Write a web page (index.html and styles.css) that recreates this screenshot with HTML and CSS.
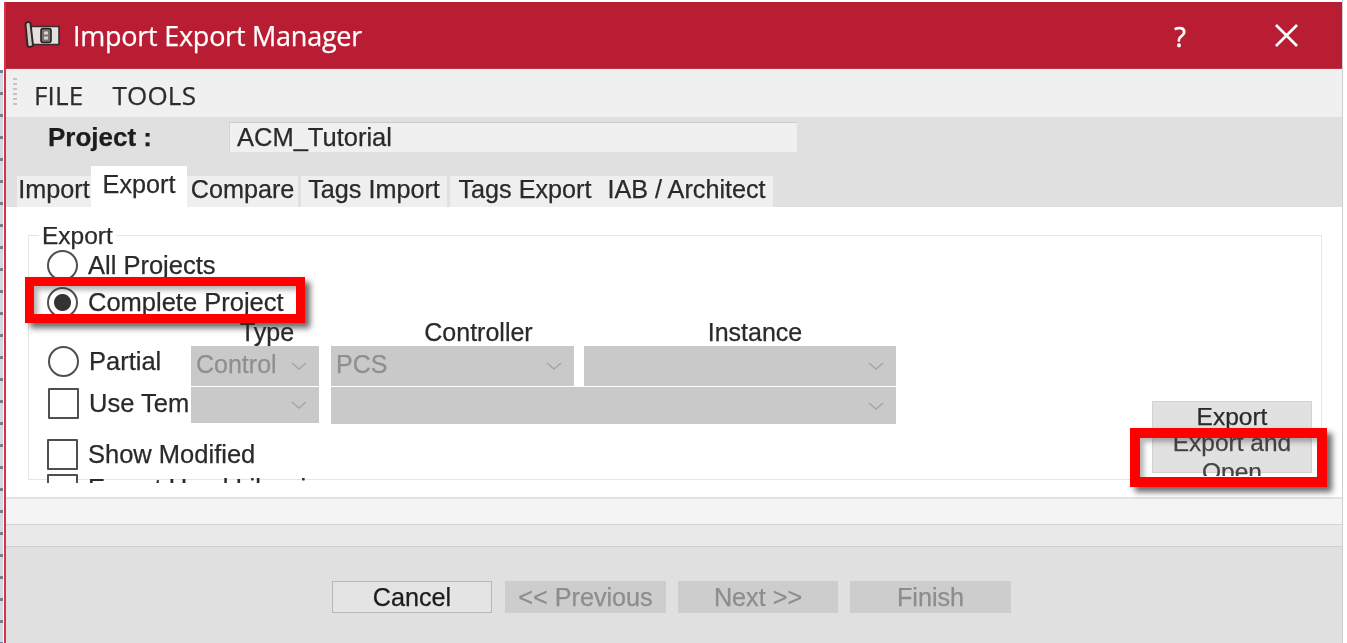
FILE: index.html
```html
<!DOCTYPE html>
<html lang="en">
<head>
<meta charset="utf-8">
<title>Import Export Manager</title>
<link rel="stylesheet" href="styles.css">
</head>
<body>
<div class="window">
  <header class="titlebar">
    <svg class="app-icon" viewBox="0 0 36 26" aria-hidden="true">
      <path d="M7 5 H35 V23 H7 Z" fill="#e4e2df" stroke="#3a2a2a" stroke-width="1.6"/>
      <path d="M1.5 3 C1.5 0 6 0 6.5 2 L9 24 C7 26 4 26 3.5 24 Z" fill="#cfcac3" stroke="#33282a" stroke-width="2"/>
      <rect x="17" y="7" width="10" height="14" rx="2" fill="#77716f" stroke="#2a2020" stroke-width="1.6"/>
      <rect x="20" y="10" width="4" height="3" fill="#d8d4d0"/>
      <rect x="20" y="15" width="4" height="3" fill="#d8d4d0"/>
    </svg>
    <h1 class="title">Import Export Manager</h1>
    <span class="help">?</span>
    <svg class="close" viewBox="0 0 24 24" aria-hidden="true"><path d="M1 1 L23 23 M23 1 L1 23" stroke="#fff" stroke-width="2.8"/></svg>
  </header>

  <nav class="menubar">
    <span class="gripper"></span>
    <span class="menu-item">FILE</span>
    <span class="menu-item">TOOLS</span>
  </nav>

  <div class="project-row">
    <label class="project-label">Project :</label>
    <div class="project-input">ACM_Tutorial</div>
  </div>

  <div class="tabs">
    <span class="tab tab-import">Import</span>
    <span class="tab tab-export is-active">Export</span>
    <span class="tab tab-compare">Compare</span>
    <span class="tab tab-timport">Tags Import</span>
    <span class="tab tab-texport">Tags Export</span>
    <span class="tab tab-iab">IAB / Architect</span>
  </div>

  <main class="panel">
    <section class="group">
      <span class="group-title">Export</span>
      <div class="group-body">
        <div class="opt opt-all"><span class="radio"></span><span>All Projects</span></div>
        <div class="opt opt-complete"><span class="radio is-checked"></span><span>Complete Project</span></div>

        <span class="col-label col-type">Type</span>
        <span class="col-label col-controller">Controller</span>
        <span class="col-label col-instance">Instance</span>

        <div class="opt opt-partial"><span class="radio"></span><span>Partial</span></div>
        <div class="select sel-type"><span>Control</span><svg class="chev" viewBox="0 0 16 8"><path d="M1 1 L8 7 L15 1"/></svg></div>
        <div class="select sel-controller"><span>PCS</span><svg class="chev" viewBox="0 0 16 8"><path d="M1 1 L8 7 L15 1"/></svg></div>
        <div class="select sel-instance"><span></span><svg class="chev" viewBox="0 0 16 8"><path d="M1 1 L8 7 L15 1"/></svg></div>

        <div class="opt opt-template"><span class="check"></span><span>Use Tem</span></div>
        <div class="select sel-type2"><span></span><svg class="chev" viewBox="0 0 16 8"><path d="M1 1 L8 7 L15 1"/></svg></div>
        <div class="select sel-wide"><span></span><svg class="chev" viewBox="0 0 16 8"><path d="M1 1 L8 7 L15 1"/></svg></div>

        <div class="opt opt-modified"><span class="check"></span><span>Show Modified</span></div>
        <div class="opt opt-hidden"><span class="check"></span><span>Export Used Libraries</span></div>

        <div class="actions">
          <button class="btn btn-export">Export</button>
          <div class="btn-clip"><button class="btn btn-open"><span class="btn-open-text">Export and<br>Open</span></button></div>
        </div>
      </div>
    </section>
  </main>

  <div class="status"></div>
  <div class="strip"></div>

  <footer class="footer">
    <button class="nav-btn">Cancel</button>
    <button class="nav-btn is-disabled">&lt;&lt; Previous</button>
    <button class="nav-btn is-disabled">Next &gt;&gt;</button>
    <button class="nav-btn is-disabled">Finish</button>
  </footer>

  <div class="callout callout-project"></div>
  <div class="callout callout-open"></div>
</div>
</body>
</html>
```

FILE: styles.css
```css
* { box-sizing: border-box; }
html, body { margin: 0; height: 100%; }
body {
  background: #fff repeating-linear-gradient(180deg, #6f8194 0 3px, #d3d9e0 3px 22px) 0 70px / 3px 100% no-repeat;
  padding-left: 4px;
  overflow: hidden;
  font-family: "Liberation Sans", Arial, sans-serif;
  color: #222;
}
.window {
  position: relative;
  width: 1339px;
  height: 643px;
  padding-top: 2px;
  display: flex;
  flex-direction: column;
  border-right: 1px solid #cfcfcf;
  filter: blur(0.75px);
  background: #fff;
  -webkit-text-stroke: 0.25px currentColor;
}
.window::before {
  content: "";
  position: absolute;
  left: 0; top: 2px; bottom: 0;
  width: 2px;
  background: #d8324a;
  z-index: 1;
}

/* title bar */
.titlebar {
  height: 67px;
  flex: none;
  display: flex;
  align-items: center;
  background: #b91d33;
  color: #fff;
  padding-left: 20px;
  border-bottom: 1px solid #c2334a;
}
.app-icon { width: 36px; height: 27px; flex: none; margin-top: -1px; }
.title {
  margin: 0 0 0 13px;
  font: 400 27px/1 "Open Sans", sans-serif;
  letter-spacing: -0.25px;
  flex: 1;
}
.help { font: 400 27px/1 "Open Sans", sans-serif; margin: 2px 89px 0 0; -webkit-text-stroke: 0.6px #fff; }
.close { width: 23px; height: 23px; margin-right: 44px; flex: none; margin-top: 1px; }

/* menu */
.menubar {
  height: 48px;
  flex: none;
  display: flex;
  align-items: center;
  background: #f0f0f0;
  padding: 3px 0 0 9px;
  font: 400 26px/1 "Open Sans", sans-serif;
  color: #2c2c2c;
}
.gripper {
  width: 4px; height: 30px;
  margin-top: -3px;
  background: repeating-linear-gradient(180deg, #c4c4c4 0 2px, transparent 2px 5px);
  margin-right: 17px;
}
.menu-item { margin-right: 29px; letter-spacing: 0.2px; }

/* project */
.project-row {
  height: 49px;
  flex: none;
  display: flex;
  align-items: flex-start;
  background: #e0e0e0;
  padding: 5px 0 0 44px;
}
.project-label { width: 181px; font-weight: 700; font-size: 26px; line-height: 30px; color: #1c1c1c; }
.project-input {
  width: 568px; height: 30px;
  background: #f0f0f0;
  border-top: 1px solid #ccc;
  border-left: 1px solid #d4d4d4;
  padding-left: 7px;
  font-size: 25.5px; line-height: 29px;
  color: #2a2a2a;
}

/* tabs */
.tabs {
  height: 41px;
  flex: none;
  display: flex;
  align-items: flex-end;
  background: #e0e0e0;
  padding-left: 13px;
  font-size: 25.2px;
}
.tab {
  height: 31px;
  line-height: 26px;
  text-align: center;
  background: #efefef;
  color: #2a2a2a;
  white-space: nowrap;
  flex: none;
}
.tab-import { width: 74px; }
.tab-export { width: 96px; height: 41px; line-height: 36px; background: #fff; }
.tab-compare { width: 111px; }
.tab-timport { width: 146px; margin-left: 3px; }
.tab-texport { width: 150px; margin-left: 3px; }
.tab-iab { width: 173px; }

/* panel */
.panel {
  height: 290px;
  flex: none;
  background: #fff;
  padding: 28px 20px 0 24px;
}
.group {
  position: relative;
  height: 245px;
  border: 1px solid #e6e6e6;
}
.group-title {
  position: absolute;
  left: 10px; top: -13px;
  padding: 0 3px;
  background: #fff;
  font-size: 24.5px;
  line-height: 26px;
  color: #2a2a2a;
}
.group-body {
  height: 247px;
  overflow: hidden;
  display: grid;
  grid-template-columns: 162px 128px 12px 243px 10px 312px 1fr;
  grid-template-rows: 10px 38px 36px 26px 40px 38px 12px 38px 1fr;
  font-size: 25.5px;
  color: #2a2a2a;
}
.opt { display: flex; align-items: center; gap: 10px; padding-left: 18px; white-space: nowrap; min-width: 0; }
.opt-all { grid-column: 1 / 4; grid-row: 2; }
.opt-complete { grid-column: 1 / 4; grid-row: 3; }
.opt-partial { grid-column: 1; grid-row: 5; padding: 0 0 10px 19px; }
.opt-template { grid-column: 1; grid-row: 6; padding: 0 0 4px 19px; overflow: hidden; }
.opt-modified { grid-column: 1 / 4; grid-row: 8; padding-bottom: 2px; }
.opt-hidden { grid-column: 1 / 4; grid-row: 9; align-items: flex-start; }
.radio {
  width: 31px; height: 31px;
  flex: none;
  border-radius: 50%;
  border: 2px solid #4f4f4f;
  background: #fff;
}
.radio.is-checked { background: radial-gradient(circle, #333 0 8px, #fff 9px); }
.check {
  width: 31px; height: 31px;
  flex: none;
  border: 2px solid #4f4f4f;
  border-radius: 1px;
  background: #fff;
}
.col-label { grid-row: 4; text-align: center; font-size: 25px; line-height: 24px; color: #2a2a2a; }
.col-type { grid-column: 2; padding-left: 24px; white-space: nowrap; }
.col-controller { grid-column: 4; padding-left: 52px; }
.col-instance { grid-column: 6; padding-left: 30px; }

.select {
  display: flex;
  align-items: center;
  justify-content: space-between;
  background: #c9c9c9;
  color: #8f8f8f;
  padding: 0 12px 0 5px;
  font-size: 25px;
  overflow: hidden;
}
.select > span { margin-top: -4px; }
.sel-type { grid-column: 2; grid-row: 5; }
.sel-controller { grid-column: 4; grid-row: 5; }
.sel-instance { grid-column: 6; grid-row: 5; }
.sel-type2 { grid-column: 2; grid-row: 6; margin-top: 1px; margin-bottom: 1px; }
.sel-wide { grid-column: 4 / 7; grid-row: 6; margin-top: 1px; }
.chev { width: 16px; height: 8px; flex: none; fill: none; stroke: #a5a5a5; stroke-width: 1.5; }

.actions {
  grid-column: 7;
  grid-row: 5 / 10;
  display: flex;
  flex-direction: column;
  align-items: flex-end;
  justify-content: flex-start;
  padding: 55px 9px 0 0;
}
.btn {
  width: 160px;
  background: #e1e1e1;
  border: 1px solid #d2d2d2;
  font: 400 24.5px/29px "Liberation Sans", sans-serif;
  color: #2a2a2a;
  padding: 0;
  -webkit-text-stroke: 0.25px currentColor;
}
.btn-export { height: 32px; flex: none; line-height: 30px; }
.btn-clip { height: 43px; width: 160px; overflow: hidden; flex: none; }
.btn-open { height: 40px; display: block; overflow: visible; }
.btn-open-text { display: block; margin-top: -6px; color: #444; }

/* lower strips */
.status { height: 28px; flex: none; background: #f4f4f4; border-top: 2px solid #e2e2e2; border-bottom: 1px solid #d4d4d4; }
.strip { height: 22px; flex: none; background: #e9e9e9; border-bottom: 1px solid #cfcfcf; }
.footer {
  flex: 1;
  background: #e0e0e0;
  display: flex;
  align-items: flex-start;
  gap: 12px;
  padding: 34px 0 0 328px;
}
.nav-btn {
  width: 161px; height: 32px;
  background: #e4e4e4;
  border: 1px solid #b8b8b8;
  font: 400 25.2px/30px "Liberation Sans", sans-serif;
  color: #1c1c1c;
  padding: 0;
  -webkit-text-stroke: 0.25px currentColor;
}
.nav-btn:first-child { width: 160px; margin-right: 1px; }
.nav-btn:nth-child(3) { width: 160px; }
.nav-btn.is-disabled { background: #cdcdcd; border-color: #cdcdcd; color: #8d8d8d; }

/* red highlight annotations */
.callout {
  position: absolute;
  border: 10px solid #fe0000;
  box-shadow: 5px 5px 6px rgba(40, 40, 40, 0.7), inset 4px 4px 5px rgba(40, 40, 40, 0.35);
  z-index: 2;
}
.callout-project { left: 21px; top: 277px; width: 280px; height: 46px; border-width: 9px; }
.callout-open { left: 1126px; top: 428px; width: 197px; height: 59px; }
```
